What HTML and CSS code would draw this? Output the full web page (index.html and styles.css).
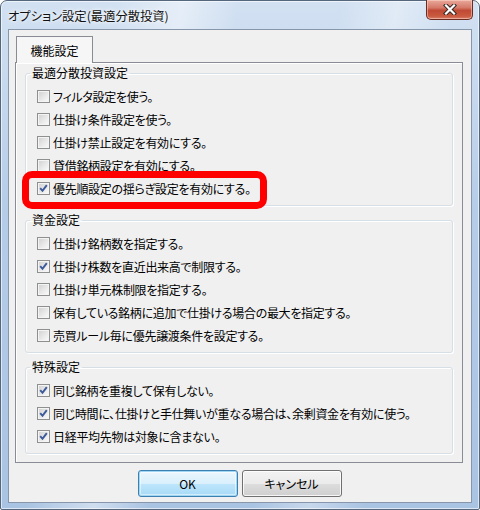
FILE: index.html
```html
<!DOCTYPE html>
<html lang="ja">
<head>
<meta charset="utf-8">
<title>オプション設定(最適分散投資)</title>
<link rel="stylesheet" href="styles.css">
</head>
<body>
<div class="window">
  <div class="titlebar">
    <span class="title">オプション設定(最適分散投資)</span>
    <button class="close" aria-label="閉じる">
      <svg width="14" height="11" viewBox="0 0 14 11">
        <path d="M3 1.5 L11 9.5 M11 1.5 L3 9.5" stroke="#3a2622" stroke-width="4.2" stroke-linecap="square" fill="none"/>
        <path d="M3 1.5 L11 9.5 M11 1.5 L3 9.5" stroke="#ffffff" stroke-width="2.2" stroke-linecap="square" fill="none"/>
      </svg>
    </button>
  </div>
  <div class="client">
    <div class="tabs"><div class="tab">機能設定</div></div>
    <div class="panel">
      <fieldset class="group">
        <legend>最適分散投資設定</legend>
        <label class="row"><span class="cb"></span><span>フィルタ設定を使う。</span></label>
        <label class="row"><span class="cb"></span><span>仕掛け条件設定を使う。</span></label>
        <label class="row"><span class="cb"></span><span>仕掛け禁止設定を有効にする。</span></label>
        <label class="row"><span class="cb"></span><span>貸借銘柄設定を有効にする。</span></label>
        <label class="row"><span class="cb checked"><svg width="11" height="11" viewBox="0 0 11 11"><path d="M2.2 5.2 L4.5 7.8 L8.8 2.2" stroke="#3d5b9b" stroke-width="2" fill="none"/></svg></span><span>優先順設定の揺らぎ設定を有効にする。</span></label>
      </fieldset>
      <fieldset class="group">
        <legend>資金設定</legend>
        <label class="row"><span class="cb"></span><span>仕掛け銘柄数を指定する。</span></label>
        <label class="row"><span class="cb checked"><svg width="11" height="11" viewBox="0 0 11 11"><path d="M2.2 5.2 L4.5 7.8 L8.8 2.2" stroke="#3d5b9b" stroke-width="2" fill="none"/></svg></span><span>仕掛け株数を直近出来高で制限する。</span></label>
        <label class="row"><span class="cb"></span><span>仕掛け単元株制限を指定する。</span></label>
        <label class="row"><span class="cb"></span><span>保有している銘柄に追加で仕掛ける場合の最大を指定する。</span></label>
        <label class="row"><span class="cb"></span><span>売買ルール毎に優先譲渡条件を設定する。</span></label>
      </fieldset>
      <fieldset class="group">
        <legend>特殊設定</legend>
        <label class="row"><span class="cb checked"><svg width="11" height="11" viewBox="0 0 11 11"><path d="M2.2 5.2 L4.5 7.8 L8.8 2.2" stroke="#3d5b9b" stroke-width="2" fill="none"/></svg></span><span>同じ銘柄を重複して保有しない。</span></label>
        <label class="row"><span class="cb checked"><svg width="11" height="11" viewBox="0 0 11 11"><path d="M2.2 5.2 L4.5 7.8 L8.8 2.2" stroke="#3d5b9b" stroke-width="2" fill="none"/></svg></span><span>同じ時間に、仕掛けと手仕舞いが重なる場合は、余剰資金を有効に使う。</span></label>
        <label class="row"><span class="cb checked"><svg width="11" height="11" viewBox="0 0 11 11"><path d="M2.2 5.2 L4.5 7.8 L8.8 2.2" stroke="#3d5b9b" stroke-width="2" fill="none"/></svg></span><span>日経平均先物は対象に含まない。</span></label>
      </fieldset>
    </div>
    <div class="buttons">
      <button class="btn default">OK</button>
      <button class="btn">キャンセル</button>
    </div>
  </div>
  <div class="highlight"></div>
</div>
</body>
</html>
```

FILE: styles.css
```css
* { box-sizing: border-box; }
html, body { margin: 0; padding: 0; }
body {
  width: 480px;
  height: 510px;
  overflow: hidden;
  background: #ffffff;
  font-family: "Noto Sans CJK JP", "Noto Sans", sans-serif;
  font-size: 12px;
  color: #000;
  font-feature-settings: "palt";
}

.window {
  position: relative;
  width: 480px;
  height: 510px;
  display: flex;
  flex-direction: column;
  border: 1px solid #55677d;
  border-radius: 7px 7px 2px 2px;
  padding: 0 7px 6px 7px;
  background:
    linear-gradient(100deg, rgba(255,255,255,0) 20%, rgba(255,255,255,0.45) 32%, rgba(255,255,255,0) 42%, rgba(255,255,255,0) 60%, rgba(255,255,255,0.35) 70%, rgba(255,255,255,0) 80%),
    linear-gradient(to bottom, #d2e1f2 0%, #b6cde8 40%, #a9c3e2 100%);
  box-shadow: inset 0 0 0 1px rgba(255,255,255,0.6);
}

.titlebar {
  height: 28px;
  margin: 0 -7px;
  padding: 0 6px 0 7px;
  display: flex;
  justify-content: space-between;
  align-items: flex-start;
}

.title {
  padding-top: 8px;
  line-height: 14px;
  font-size: 12.3px;
  color: #111;
  text-shadow: 0 0 6px rgba(255,255,255,0.9), 0 0 3px #fff;
}

.close {
  width: 47px;
  height: 20px;
  margin: -1px 0 0 0;
  padding: 0;
  border: 1px solid #6a2b22;
  border-top: none;
  border-radius: 0 0 5px 5px;
  background: linear-gradient(to bottom, #e9a99b 0%, #d57a69 40%, #c04a35 55%, #c95a3f 85%, #d9806a 100%);
  box-shadow: inset 0 0 0 1px rgba(255,220,210,0.5);
  display: flex;
  align-items: center;
  justify-content: center;
}

.client {
  flex: 1;
  display: flex;
  flex-direction: column;
  background: #f0f0f0;
  border: 1px solid #8796aa;
  padding: 6px 8px 0 6px;
}

.tabs {
  display: flex;
  padding-left: 1px;
  position: relative;
  z-index: 1;
}

.tab {
  width: 77px;
  height: 27px;
  margin-bottom: -1px;
  border: 1px solid #898c95;
  border-bottom: none;
  background: #f6f6f6;
  display: flex;
  align-items: center;
  justify-content: center;
  font-size: 12px;
}

.panel {
  display: flex;
  flex-direction: column;
  gap: 7px;
  border: 1px solid #898c95;
  background: #f0f0f0;
  box-shadow: inset 1px 1px 0 #ffffff;
  padding: 3px 9px 8px 9px;
}

.group {
  margin: 0;
  border: 1px solid #d5dfe5;
  border-radius: 3px;
  padding: 5px 0 5px 4px;
  min-width: 0;
  box-shadow: inset 1px 1px 0 #ffffff, 1px 1px 0 #ffffff;
}

.group legend {
  padding: 0 2px;
  line-height: 14px;
  font-size: 12px;
}

.row {
  display: flex;
  align-items: center;
  gap: 3px;
  height: 23px;
  padding-left: 7px;
  white-space: nowrap;
  letter-spacing: -0.3px;
}

.cb {
  flex: none;
  width: 13px;
  height: 13px;
  border: 1px solid #8e8f8f;
  background: linear-gradient(135deg, #cfcfcf 0%, #e9e9e9 55%, #fbfbfb 100%);
  box-shadow: inset 0 0 0 1px #f4f4f4;
  display: flex;
  align-items: center;
  justify-content: center;
}

.cb svg { display: block; }

.buttons {
  display: flex;
  justify-content: center;
  gap: 4px;
  margin-top: 7px;
  padding-left: 1px;
}

.btn {
  width: 100px;
  height: 27px;
  padding: 0;
  font-family: "Noto Sans CJK JP", "Noto Sans", sans-serif;
  font-feature-settings: "palt";
  font-size: 12px;
  color: #000;
  border: 1px solid #707070;
  border-radius: 3px;
  background: linear-gradient(to bottom, #f2f2f2 0%, #ebebeb 50%, #dddddd 51%, #cfcfcf 100%);
  box-shadow: inset 0 0 0 1px rgba(255,255,255,0.8);
}

.btn.default {
  border-color: #3c7fb1;
  background: linear-gradient(to bottom, #eaf6fd 0%, #d9f0fc 50%, #bee6fd 51%, #a7d9f5 100%);
  box-shadow: inset 0 0 0 1px #9ed6f3, inset 0 0 0 2px rgba(255,255,255,0.5);
}

.highlight {
  position: absolute;
  left: 21px;
  top: 170px;
  width: 245px;
  height: 38px;
  border: 7px solid #ff0000;
  border-radius: 10px;
  pointer-events: none;
}
```
